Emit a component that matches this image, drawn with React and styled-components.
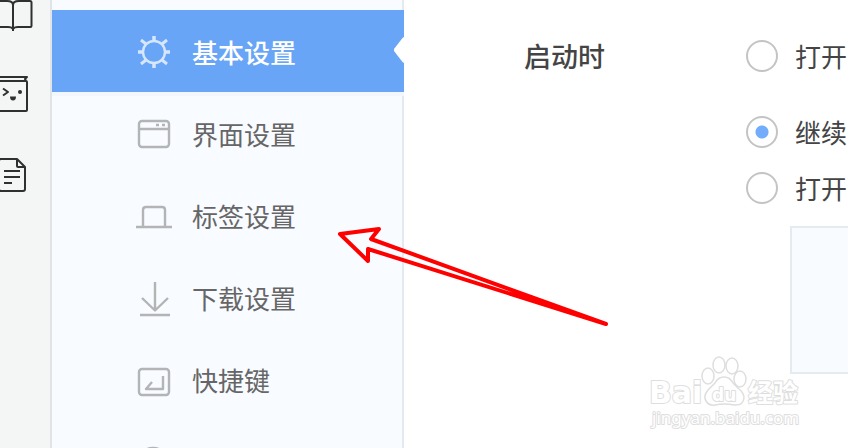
import React, { useState } from "react";
import styled, { createGlobalStyle } from "styled-components";

const GlobalStyle = createGlobalStyle`
  * {
    box-sizing: border-box;
  }

  body {
    margin: 0;
    background: #fff;
    font-family: "Noto Sans CJK SC", sans-serif;
    font-size: 26px;
    color: #444;
  }
`

const Page = styled.div`
  position: relative;
  display: flex;
  height: 100vh;
  overflow: hidden;
`

const Rail = styled.aside`
  flex: none;
  display: flex;
  flex-direction: column;
  gap: 40px;
  width: 52px;
  background: #f4f6f6;
  border-right: 2px solid #e1e4e6;
`

const RailButton = styled.button`
  display: block;
  height: 36px;
  padding: 0;
  border: none;
  background: none;
  color: #2f312f;
  text-align: left;
  cursor: pointer;

  svg {
    display: block;
    overflow: visible;
  }
`

const Sidebar = styled.nav`
  flex: none;
  width: 352px;
  padding-top: 10px;
  background: linear-gradient(#e4ebf0, #e4ebf0) right / 2px 100% no-repeat #f8fbff;
`

const NavItem = styled.a`
  position: relative;
  display: flex;
  align-items: center;
  gap: 20px;
  height: 82px;
  padding-left: 84px;
  line-height: 36px;
  text-decoration: none;
  font-weight: ${props => props.$active ? 500 : 400};
  color: ${props => props.$active ? "#fff" : "#666"};
  background: ${props => props.$active ? "#68a5f7" : "transparent"};
  box-shadow: ${props => props.$active ? "0 4px 0 #f3f6fa" : "none"};

  svg {
    flex: none;
    color: ${props => props.$active ? "#d6e6fd" : "#b3b4b5"};
    overflow: visible;
  }
`

const NavText = styled.span`
  padding-top: 2px;
`

const Notch = styled.span`
  position: absolute;
  top: 27px;
  right: 0;
  width: 10px;
  height: 26px;
  background: #fff;
  clip-path: polygon(100% 0, 85% 4%, 0 46%, 0 54%, 85% 96%, 100% 100%);
`

const Main = styled.main`
  flex: 1;
  min-width: 0;
  display: flex;
  align-items: flex-start;
  padding: 36px 0 0 120px;
`

const Heading = styled.h2`
  flex: none;
  width: 222px;
  margin: 0;
  font-size: 27px;
  font-weight: 500;
  line-height: 40px;
`

const Options = styled.div`
  flex: 1;
  min-width: 0;
  display: flex;
  flex-direction: column;
`

const Option = styled.label`
  display: flex;
  align-items: center;
  gap: 17px;
  height: 40px;
  margin-bottom: ${props => props.$spaced ? "36px" : "16px"};
  white-space: nowrap;
  cursor: pointer;
`

const OptionText = styled.span`
  padding-bottom: 2px;
`

const Radio = styled.input`
  appearance: none;
  flex: none;
  width: 32px;
  height: 32px;
  margin: 0;
  border: 2px solid #c4c4c4;
  border-radius: 50%;
  background: #fff;

  &:checked {
    background: radial-gradient(circle, #72acfa 6px, #fff 7px);
  }
`

const PageList = styled.div`
  height: 148px;
  margin: 2px 0 0 44px;
  border: 2px solid #e4ebf0;
  border-right: none;
  background: #f8fbff;
`

const Pointer = styled.svg`
  position: absolute;
  left: 336px;
  top: 224px;
  pointer-events: none;
`

const Watermark = styled.svg`
  position: absolute;
  right: 40px;
  bottom: 14px;
  pointer-events: none;
  font-family: "DejaVu Sans", "Noto Sans CJK SC", sans-serif;
  fill: #fff;
  stroke: #dedede;
  stroke-width: 2;
  stroke-linejoin: round;

  text {
    paint-order: stroke;
  }
`

const stroke = { fill: "none", stroke: "currentColor", strokeLinejoin: "round" }

const NavIcon = ({ children }) => (
  <svg width="36" height="36" viewBox="0 0 36 36" {...stroke} strokeWidth="2.4" aria-hidden="true">{children}</svg>
)

const RailIcon = ({ children }) => (
  <svg width="36" height="36" viewBox="0 0 36 36" {...stroke} strokeWidth="2" aria-hidden="true">{children}</svg>
)

const items = [
  {
    id: "basic",
    label: "基本设置",
    icon: (
      <>
        <circle cx="18" cy="19" r="11" />
        <path strokeWidth="3.500" d="M18 3v4M18 31v4M2 19h4M30 19h4" />
        <path strokeWidth="3" d="M5 7l5 4M26 27l5 4M31 7l-5 4M10 27l-5 4" />
      </>
    ),
  },
  {
    id: "interface",
    label: "界面设置",
    icon: (
      <>
        <rect x="3" y="6" width="30" height="26" rx="3" />
        <path d="M3 14h30M20 10h3M26 10h3" />
      </>
    ),
  },
  {
    id: "tabs",
    label: "标签设置",
    icon: <path d="M0 30h36M7 30V13q0-3 3-3h16q3 0 3 3v17" />,
  },
  {
    id: "download",
    label: "下载设置",
    icon: <path d="M19 3v28M6 19l13 12.500L32 19M4 36h30" />,
  },
  {
    id: "keys",
    label: "快捷键",
    icon: (
      <>
        <rect x="3" y="8" width="30" height="26" rx="3" />
        <path d="M27 15v13H10l6-7" />
      </>
    ),
  },
  {
    id: "more",
    icon: <circle cx="17" cy="21" r="16" />,
  },
]

const options = [
  { id: "page", label: "打开", spaced: true },
  { id: "resume", label: "继续" },
  { id: "custom", label: "打开" },
]

function App() {
  const [active, setActive] = useState("basic")
  const [startup, setStartup] = useState("resume")

  return (
    <Page>
      <GlobalStyle />
      <Rail>
        <RailButton type="button" aria-label="书签">
          <RailIcon>
            <path d="M-6 1H7q6 0 6 4q0-4 6-4h11q1.500 0 1.500 1.500V26q0 1-1 1H18q-4 0-5 2q-1-2-5-2H-6M13 4v27" />
          </RailIcon>
        </RailButton>
        <RailButton type="button" aria-label="脚本">
          <RailIcon>
            <path d="M-2 1h29l-2 2 1 2M-2 5h28q1 0 1 1v28q0 1-1 1H-2" />
            <path d="M3 12.500l5 3.500-5 3.500" />
            <circle cx="20" cy="16" r="2" fill="currentColor" stroke="none" />
            <path d="M10 20.500h6q0 4-3 4t-3-4z" fill="currentColor" stroke="none" />
          </RailIcon>
        </RailButton>
        <RailButton type="button" aria-label="笔记">
          <RailIcon>
            <path d="M1 7H17l8 8v22q0 2-2 2H1q-2 0-2-2M-1 9q0-2 2-2M17 7v7q0 1 1 1h7M4 19h16M4 25h16M4 31h8" />
          </RailIcon>
        </RailButton>
      </Rail>
      <Sidebar>
        {items.map(item => (
          <NavItem
            key={item.id}
            href={"#" + item.id}
            $active={item.id === active}
            aria-label={item.label ? undefined : "更多"}
            onClick={() => setActive(item.id)}
          >
            <NavIcon>{item.icon}</NavIcon>
            <NavText>{item.label}</NavText>
            {item.id === active && <Notch />}
          </NavItem>
        ))}
      </Sidebar>
      <Main>
        <Heading id="startup">启动时</Heading>
        <Options role="radiogroup" aria-labelledby="startup">
          {options.map(option => (
            <Option key={option.id} $spaced={option.spaced}>
              <Radio
                type="radio"
                name="startup"
                checked={startup === option.id}
                onChange={() => setStartup(option.id)}
              />
              <OptionText>{option.label}</OptionText>
            </Option>
          ))}
          <PageList />
        </Options>
      </Main>
      <Pointer width="276" height="106" viewBox="0 0 276 106" aria-hidden="true">
        <path
          d="M4 10L43 5L35 15L270 100L32 25L32 37Z"
          fill="none"
          stroke="#f00"
          strokeWidth="4"
          strokeLinejoin="round"
        />
      </Pointer>
      <Watermark width="160" height="80" viewBox="0 0 160 80">
        <text x="1" y="49" fontSize="30" fontWeight="700">Bai</text>
        <g strokeWidth="1.500">
          <ellipse cx="60" cy="22" rx="6" ry="8" />
          <ellipse cx="71" cy="11" rx="6" ry="8" />
          <ellipse cx="84" cy="12" rx="6" ry="8" />
          <ellipse cx="92" cy="25" rx="6" ry="8" />
          <path d="M76 23q-6 0-9 6l-7 7q-5 6-2 11q3 5 9 4q9-2 19 0q9 1 10-7q0-5-5-9l-6-6q-3-6-9-6z" />
        </g>
        <text x="64" y="47" fontSize="17" fontWeight="700">du</text>
        <text x="100" y="48" fontSize="25" fontWeight="700">经验</text>
        <text x="4" y="70" fontSize="17" fontFamily="Noto Sans">jingyan.baidu.com</text>
      </Watermark>
    </Page>
  );
}

export default App;
